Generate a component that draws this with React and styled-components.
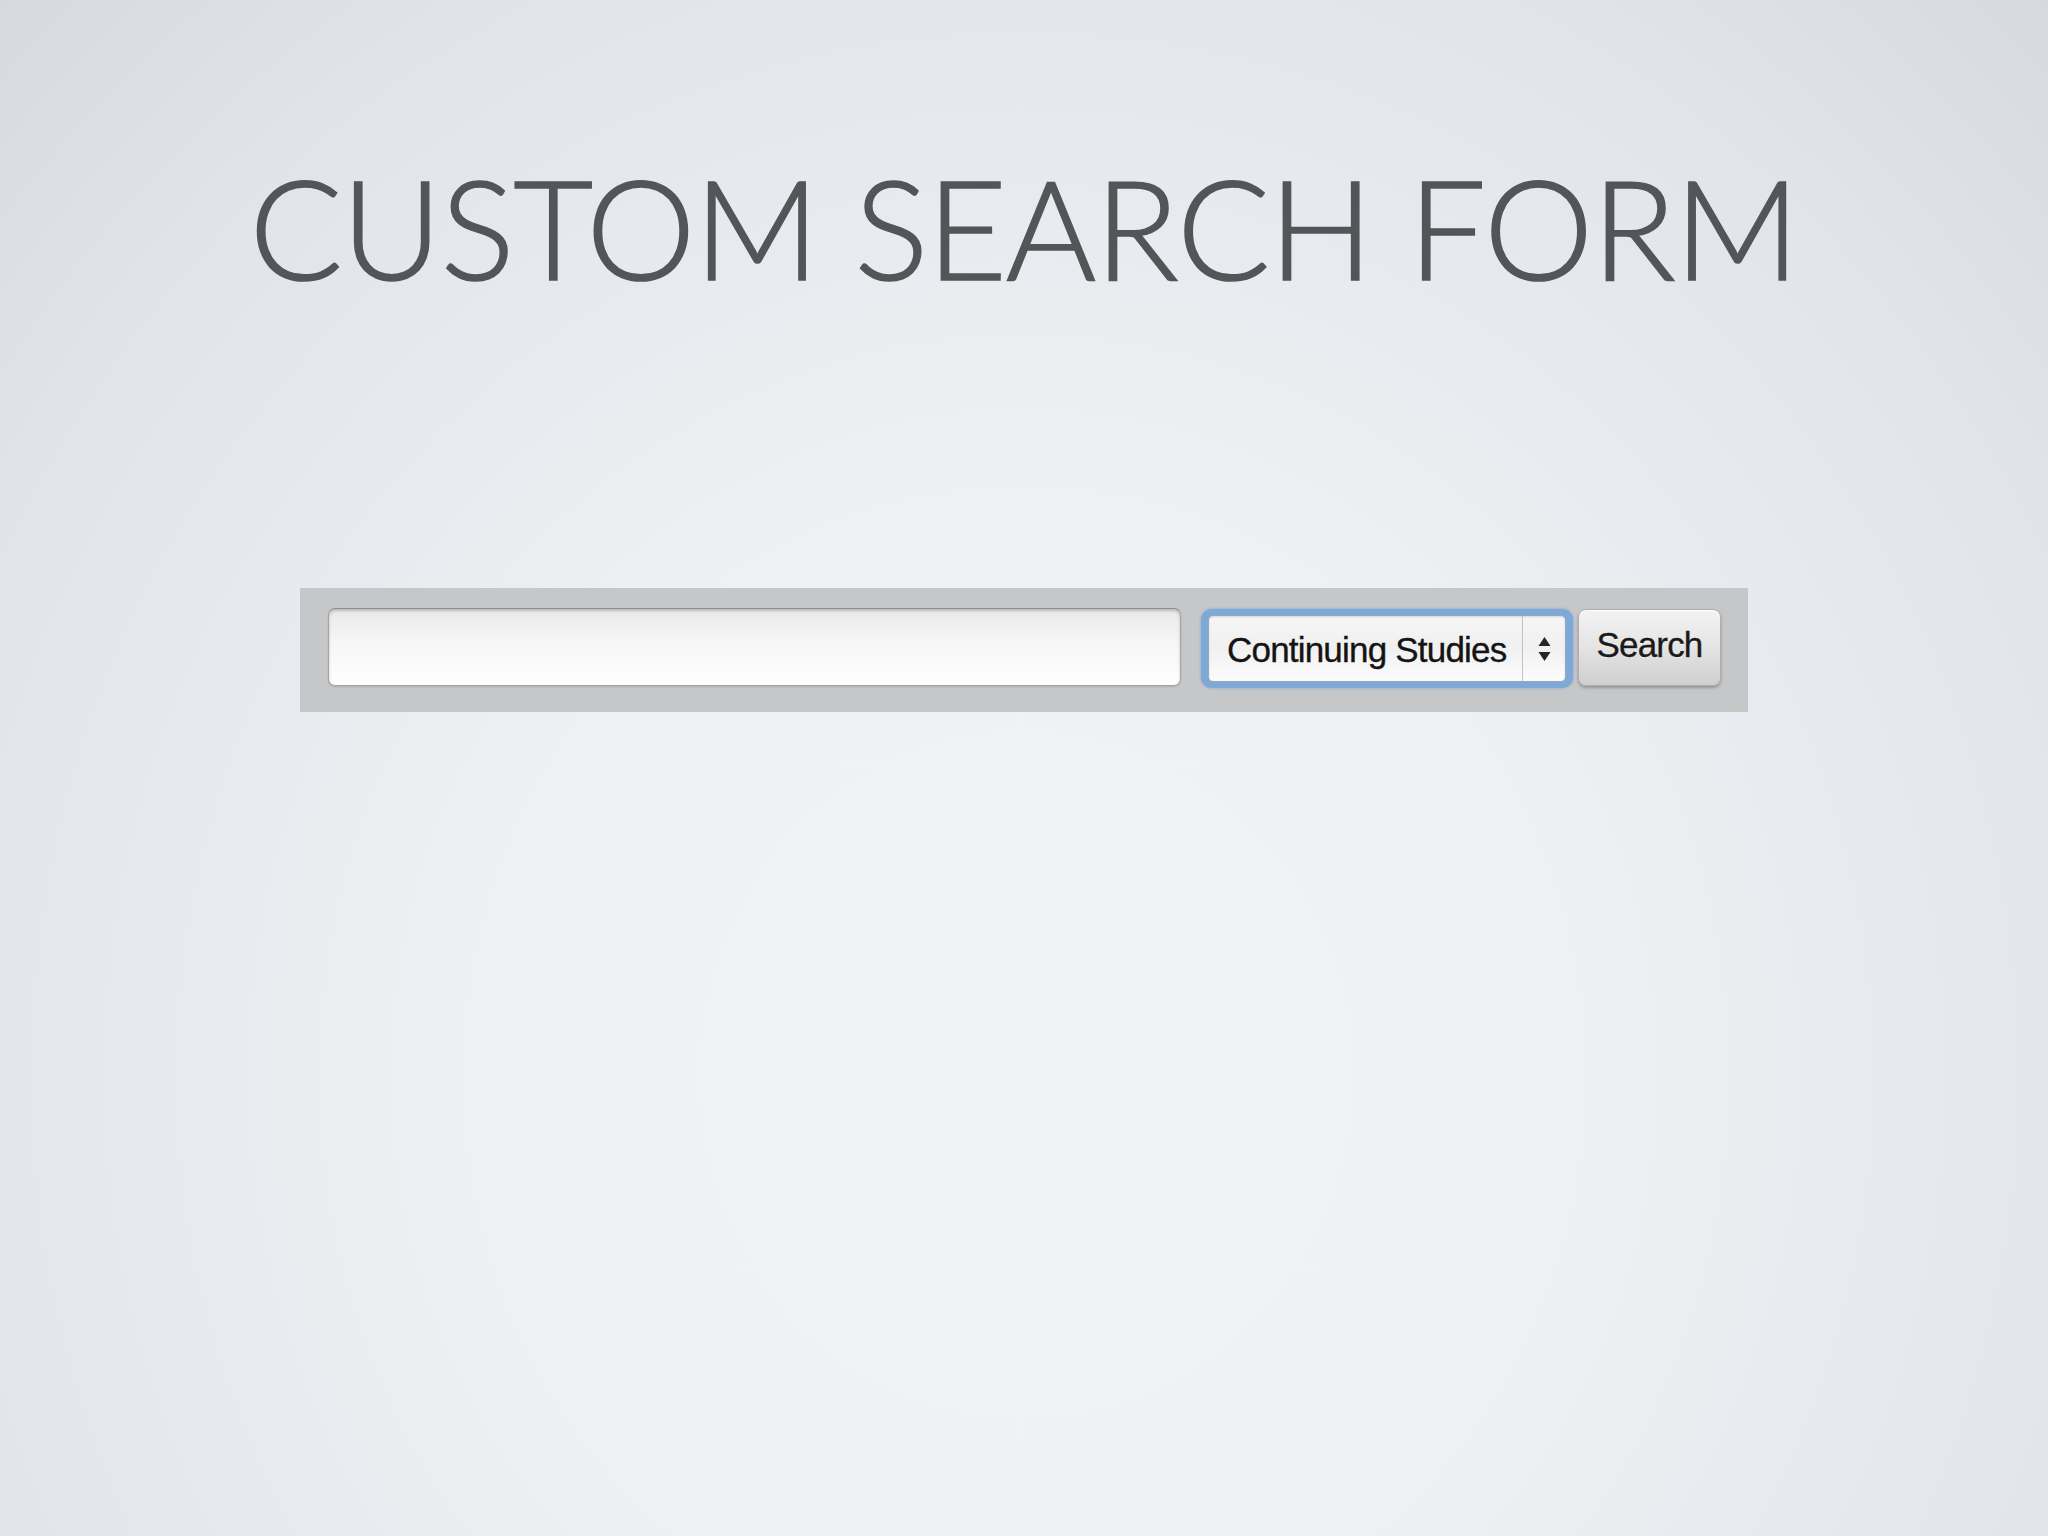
import React from "react";
import styled, { createGlobalStyle } from "styled-components";

const GlobalStyle = createGlobalStyle`
  html, body {
    margin: 0;
    padding: 0;
  }
  body {
    width: 2048px;
    height: 1536px;
    overflow: hidden;
  }
`;

const Slide = styled.div`
  width: 2048px;
  height: 1536px;
  box-sizing: border-box;
  display: flex;
  flex-direction: column;
  align-items: center;
  padding-top: 158px;
  background: radial-gradient(
    ellipse at 50% 70%,
    #f1f2f6 0%,
    #eff1f4 35%,
    #e8eaef 58%,
    #e1e4e9 78%,
    #d6dae0 100%
  );
`;

const Title = styled.h1`
  margin: 0;
  font-family: Lato, "Open Sans", sans-serif;
  font-weight: 300;
  font-size: 138px;
  line-height: 1;
  color: #535559;
  -webkit-text-stroke: 1.6px #535559;
  letter-spacing: -1.25px;
  white-space: nowrap;
`;

const FormBar = styled.form`
  margin: 292px 0 0 0;
  width: 1448px;
  height: 124px;
  box-sizing: border-box;
  padding: 20px 27px 0 28px;
  display: flex;
  align-items: flex-start;
  background: #c6c7c9;
  font-family: "Liberation Sans", Arial, sans-serif;
`;

const QueryInput = styled.input`
  flex: 0 0 853px;
  height: 78px;
  box-sizing: border-box;
  margin: 0;
  padding: 0 16px;
  border: 1px solid #a3a4a6;
  border-top-color: #8c8d8f;
  border-radius: 7px;
  background: linear-gradient(#e9e9e9 0%, #f5f5f5 40%, #ffffff 100%);
  box-shadow: inset 0 2px 3px rgba(0, 0, 0, 0.2), 0 1px 2px rgba(0, 0, 0, 0.12);
  font: inherit;
  font-size: 35px;
  outline: none;
`;

const SelectRing = styled.div`
  margin-left: 20px;
  margin-top: 1px;
  width: 372px;
  height: 79px;
  box-sizing: border-box;
  padding: 6px 7px;
  border-radius: 11px;
  background: #7ea9d7;
  box-shadow: 0 0 3px rgba(100, 150, 210, 0.7);
  display: flex;
`;

const SelectFace = styled.div`
  flex: 1;
  display: flex;
  align-items: stretch;
  border-radius: 5px;
  border: 1px solid #94a9c2;
  background: linear-gradient(#f6f6f6 0%, #f0f0f0 45%, #fcfcfc 100%);
  box-shadow: inset 0 1px 2px rgba(0, 0, 0, 0.14);
`;

const SelectLabel = styled.span`
  flex: 1;
  display: flex;
  align-items: center;
  padding: 3px 0 0 18px;
  font-size: 35px;
  letter-spacing: -0.8px;
  color: #141414;
  -webkit-text-stroke: 0.35px #141414;
  white-space: nowrap;
`;

const ArrowCell = styled.span`
  flex: 0 0 42px;
  display: flex;
  align-items: center;
  justify-content: center;
  border-left: 1px solid #c2c2c2;
`;

const SearchButton = styled.button`
  margin: 1px 0 0 5px;
  width: 143px;
  height: 77px;
  box-sizing: border-box;
  padding: 0 0 5px 0;
  border: 1px solid #adaeb0;
  border-radius: 8px;
  background: linear-gradient(#f3f3f3 0%, #e4e4e4 50%, #cfcfcf 100%);
  box-shadow: 0 2px 3px rgba(0, 0, 0, 0.25), inset 0 1px 0 #ffffff;
  font: inherit;
  font-size: 35px;
  letter-spacing: -0.8px;
  color: #1a1a1a;
  -webkit-text-stroke: 0.35px #1a1a1a;
  text-shadow: 0 1px 0 rgba(255, 255, 255, 0.7);
`;

function UpDownArrows() {
  return (
    <svg width="13" height="24" viewBox="0 0 13 24" aria-hidden="true">
      <path d="M6.5 0 L12.5 9 L0.5 9 Z" fill="#262626" />
      <path d="M0.5 15 L12.5 15 L6.5 24 Z" fill="#262626" />
    </svg>
  );
}

export default function App() {
  return (
    <>
      <GlobalStyle />
      <Slide>
        <Title>CUSTOM SEARCH FORM</Title>
        <FormBar onSubmit={(e) => e.preventDefault()}>
          <QueryInput type="text" aria-label="Search terms" />
          <SelectRing>
            <SelectFace>
              <SelectLabel>Continuing Studies</SelectLabel>
              <ArrowCell>
                <UpDownArrows />
              </ArrowCell>
            </SelectFace>
          </SelectRing>
          <SearchButton type="submit">Search</SearchButton>
        </FormBar>
      </Slide>
    </>
  );
}
